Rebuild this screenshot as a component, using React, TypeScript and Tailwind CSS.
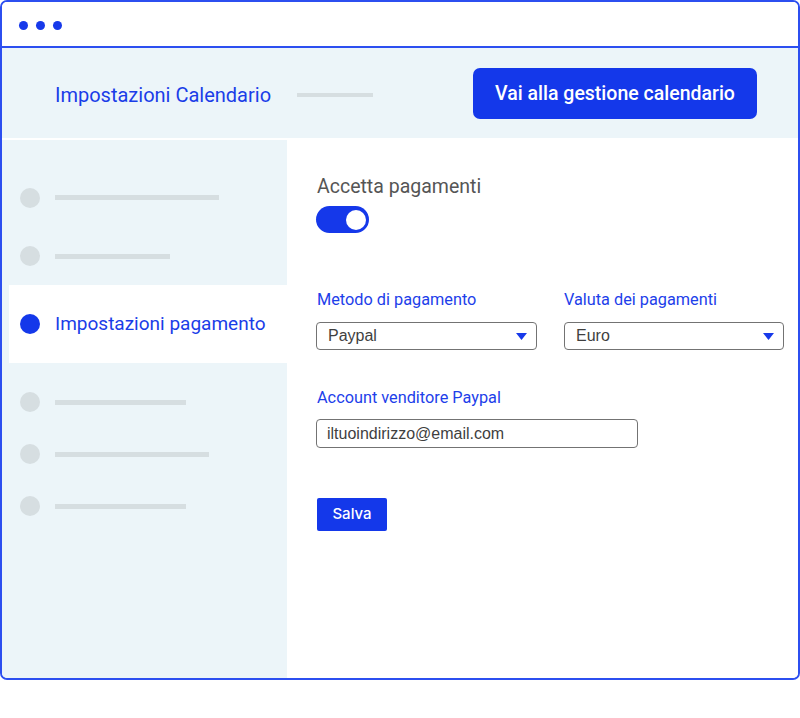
import React from "react"

const blue = "#1739ea"

function SideRow({ width, h }: { width: string; h: string }) {
  return (
    <div className={`flex items-center ${h}`}>
      <div className="ml-[18px] w-[20px] h-[20px] rounded-full bg-[#d6dee1]" />
      <div className={`ml-[15px] h-[5px] bg-[#d6dee1] ${width}`} />
    </div>
  )
}

function Select({ value, width }: { value: string; width: string }) {
  return (
    <div
      className={`mt-[12px] flex items-center justify-between h-[28px] ${width} rounded-[4px] border-[1.5px] border-[#737373] bg-white pl-[11px] pr-[9px]`}
    >
      <span className="text-[16px] text-[#3f3f3f] font-['Liberation_Sans',sans-serif]">{value}</span>
      <svg width="11" height="7" viewBox="0 0 11 7">
        <path d="M0 0 H11 L5.5 7 Z" fill={blue} />
      </svg>
    </div>
  )
}

export default function App() {
  return (
    <div className="w-[800px] h-[718px] bg-white font-['Roboto',sans-serif]">
      <div className="w-[800px] h-[680px] rounded-[7px] border-2 border-[#2c4ff0] flex flex-col overflow-hidden">
        {/* title bar */}
        <div className="h-[46px] shrink-0 flex items-center gap-[8px] pl-[17px] pt-[2px] bg-white border-b-2 border-b-[#2c4ff0]">
          <div className="w-[9px] h-[9px] rounded-full bg-[#1739ea]" />
          <div className="w-[9px] h-[9px] rounded-full bg-[#1739ea]" />
          <div className="w-[9px] h-[9px] rounded-full bg-[#1739ea]" />
        </div>

        {/* header */}
        <div className="h-[90px] shrink-0 bg-[#ecf5f9] flex items-center">
          <span className="ml-[53px] mt-[4px] text-[20px] text-[#1a3de8] leading-none">Impostazioni Calendario</span>
          <div className="ml-[26px] mt-[4px] w-[76px] h-[4px] bg-[#d6dee1]" />
          <button className="ml-auto mr-[41px] mt-[1px] h-[51px] w-[284px] rounded-[7px] bg-[#1438ea] text-white text-[19.5px] font-medium">
            Vai alla gestione calendario
          </button>
        </div>

        {/* body */}
        <div className="mt-[2px] flex flex-1">
          <div className="w-[285px] shrink-0 bg-[#ecf5f9] pt-[28px] flex flex-col">
            <SideRow width="w-[164px]" h="h-[59px]" />
            <SideRow width="w-[115px]" h="h-[58px]" />
            <div className="ml-[7px] h-[78px] bg-white flex items-center">
              <div className="ml-[11px] w-[20px] h-[20px] rounded-full bg-[#1438ea]" />
              <span className="ml-[15px] mt-[1px] text-[19px] text-[#1a3de8]">Impostazioni pagamento</span>
            </div>
            <div className="mt-[13px]" />
            <SideRow width="w-[131px]" h="h-[52px]" />
            <SideRow width="w-[154px]" h="h-[52px]" />
            <SideRow width="w-[131px]" h="h-[52px]" />
          </div>

          <div className="flex-1 bg-white pl-[29px] pt-[35px]">
            <div className="text-[19.5px] leading-[24px] text-[#555555] pl-[1px]">Accetta pagamenti</div>
            <div className="mt-[7px] w-[53px] h-[27px] rounded-full bg-[#1538ea] flex items-center justify-end pr-[3px]">
              <div className="w-[20px] h-[20px] rounded-full bg-white" />
            </div>

            <div className="mt-[57px] flex">
              <div className="w-[248px]">
                <div className="pl-[1px] text-[16.3px] leading-[20px] text-[#1d40ea]">Metodo di pagamento</div>
                <Select value="Paypal" width="w-[221px]" />
              </div>
              <div>
                <div className="text-[16.3px] leading-[20px] text-[#1d40ea]">Valuta dei pagamenti</div>
                <Select value="Euro" width="w-[220px]" />
              </div>
            </div>

            <div className="mt-[38px] pl-[1px] text-[16.3px] leading-[20px] text-[#1d40ea]">Account venditore Paypal</div>
            <div className="mt-[11px] h-[29px] w-[322px] rounded-[4px] border-[1.5px] border-[#737373] flex items-center pl-[10px]">
              <span className="text-[16px] text-[#3f3f3f] font-['Liberation_Sans',sans-serif]">iltuoindirizzo@email.com</span>
            </div>

            <button className="mt-[50px] ml-[1px] h-[33px] w-[70px] rounded-[2px] bg-[#1438ea] text-white text-[15px] font-medium font-['Inter',sans-serif]">
              Salva
            </button>
          </div>
        </div>
      </div>
    </div>
  )
}
